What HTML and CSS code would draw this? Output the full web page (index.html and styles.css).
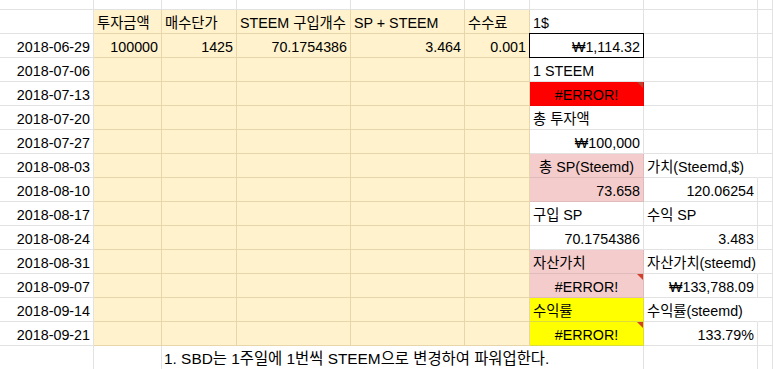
FILE: index.html
```html
<!DOCTYPE html>
<html lang="ko">
<head>
<meta charset="utf-8">
<title>Sheet</title>
<link rel="stylesheet" href="styles.css">
</head>
<body>
<div class="sheet">
  <!-- top partial row -->
  <div class="c top"></div><div class="c top"></div><div class="c top"></div><div class="c top"></div><div class="c top"></div><div class="c top"></div><div class="c top"></div><div class="c top"></div><div class="c top"></div>

  <!-- header -->
  <div class="c"></div>
  <div class="c y">투자금액</div>
  <div class="c y">매수단가</div>
  <div class="c y">STEEM 구입개수</div>
  <div class="c y">SP + STEEM</div>
  <div class="c y">수수료</div>
  <div class="c">1$</div>
  <div class="c"></div>
  <div class="c"></div>

  <div class="c r">2018-06-29</div>
  <div class="c y r">100000</div>
  <div class="c y r">1425</div>
  <div class="c y r">70.1754386</div>
  <div class="c y r">3.464</div>
  <div class="c y r">0.001</div>
  <div class="c r sel">₩1,114.32</div>
  <div class="c"></div>
  <div class="c"></div>

  <div class="c r">2018-07-06</div>
  <div class="c y"></div><div class="c y"></div><div class="c y"></div><div class="c y"></div><div class="c y"></div>
  <div class="c">1 STEEM</div>
  <div class="c"></div>
  <div class="c"></div>

  <div class="c r">2018-07-13</div>
  <div class="c y"></div><div class="c y"></div><div class="c y"></div><div class="c y"></div><div class="c y"></div>
  <div class="c red ctr tri tri-dark">#ERROR!</div>
  <div class="c"></div>
  <div class="c"></div>

  <div class="c r">2018-07-20</div>
  <div class="c y"></div><div class="c y"></div><div class="c y"></div><div class="c y"></div><div class="c y"></div>
  <div class="c">총 투자액</div>
  <div class="c"></div>
  <div class="c"></div>

  <div class="c r">2018-07-27</div>
  <div class="c y"></div><div class="c y"></div><div class="c y"></div><div class="c y"></div><div class="c y"></div>
  <div class="c r">₩100,000</div>
  <div class="c"></div>
  <div class="c"></div>

  <div class="c r">2018-08-03</div>
  <div class="c y"></div><div class="c y"></div><div class="c y"></div><div class="c y"></div><div class="c y"></div>
  <div class="c pink ctr">총 SP(Steemd)</div>
  <div class="c ovf">가치(Steemd,$)</div>
  <div class="c"></div>

  <div class="c r">2018-08-10</div>
  <div class="c y"></div><div class="c y"></div><div class="c y"></div><div class="c y"></div><div class="c y"></div>
  <div class="c pink r">73.658</div>
  <div class="c r">120.06254</div>
  <div class="c"></div>

  <div class="c r">2018-08-17</div>
  <div class="c y"></div><div class="c y"></div><div class="c y"></div><div class="c y"></div><div class="c y"></div>
  <div class="c">구입 SP</div>
  <div class="c">수익 SP</div>
  <div class="c"></div>

  <div class="c r">2018-08-24</div>
  <div class="c y"></div><div class="c y"></div><div class="c y"></div><div class="c y"></div><div class="c y"></div>
  <div class="c r">70.1754386</div>
  <div class="c r">3.483</div>
  <div class="c"></div>

  <div class="c r">2018-08-31</div>
  <div class="c y"></div><div class="c y"></div><div class="c y"></div><div class="c y"></div><div class="c y"></div>
  <div class="c pink">자산가치</div>
  <div class="c ovf">자산가치(steemd)</div>
  <div class="c"></div>

  <div class="c r">2018-09-07</div>
  <div class="c y"></div><div class="c y"></div><div class="c y"></div><div class="c y"></div><div class="c y"></div>
  <div class="c pink ctr tri">#ERROR!</div>
  <div class="c r">₩133,788.09</div>
  <div class="c"></div>

  <div class="c r">2018-09-14</div>
  <div class="c y"></div><div class="c y"></div><div class="c y"></div><div class="c y"></div><div class="c y"></div>
  <div class="c yel">수익률</div>
  <div class="c ovf">수익률(steemd)</div>
  <div class="c"></div>

  <div class="c r">2018-09-21</div>
  <div class="c y"></div><div class="c y"></div><div class="c y"></div><div class="c y"></div><div class="c y"></div>
  <div class="c yel ctr tri">#ERROR!</div>
  <div class="c r">133.79%</div>
  <div class="c"></div>

  <!-- note row -->
  <div class="c last"></div>
  <div class="c last"></div>
  <div class="c last ovf note">1. SBD는 1주일에 1번씩 STEEM으로 변경하여 파워업한다.</div>
  <div class="c last ovf"></div>
  <div class="c last ovf"></div>
  <div class="c last ovf"></div>
  <div class="c last"></div>
  <div class="c last"></div>
  <div class="c last"></div>
</div>
</body>
</html>
```

FILE: styles.css
```css
html, body {
  margin: 0;
  padding: 0;
  background: #ffffff;
}

body {
  width: 773px;
  height: 369px;
  overflow: hidden;
  font-family: "Liberation Sans", "Noto Sans CJK KR", "DejaVu Sans", sans-serif;
  font-size: 14.3px;
  color: #000000;
}

.sheet {
  display: grid;
  grid-template-columns: 94px 68px 75px 114px 114px 65px 114px 114px 15px;
  grid-template-rows: 10px repeat(14, 24px) 23px;
}

.c {
  box-sizing: border-box;
  border-right: 1px solid #e2e2e2;
  border-bottom: 1px solid #e2e2e2;
  padding: 3px 3px 0 3px;
  line-height: 20px;
  white-space: nowrap;
  overflow: hidden;
  position: relative;
}

.top {
  padding: 0;
}

.last {
  border-bottom: none;
}

.note {
  font-size: 15.4px;
  padding-left: 2px;
}

.r {
  text-align: right;
}

.ctr {
  text-align: center;
}

.y {
  background: #fff2cc;
  border-color: #e6d6aa;
}

.red {
  background: #ff0000;
  border-color: #f20000;
}

.pink {
  background: #f4cccc;
  border-color: #dfbcbc;
}

.yel {
  background: #ffff00;
  border-color: #dcdc3c;
}

.ovf {
  overflow: visible;
  border-right-color: transparent;
  z-index: 1;
}

.sel {
  overflow: visible;
}

.sel::after {
  content: "";
  position: absolute;
  top: -1px;
  left: -1px;
  right: -1px;
  bottom: -1px;
  border: 1px solid #000000;
  pointer-events: none;
}

.tri::after {
  content: "";
  position: absolute;
  top: 0;
  right: 0;
  width: 0;
  height: 0;
  border-top: 6px solid #d2402b;
  border-left: 6px solid transparent;
}

.tri-dark::after {
  border-top-color: #b8452f;
}
```
